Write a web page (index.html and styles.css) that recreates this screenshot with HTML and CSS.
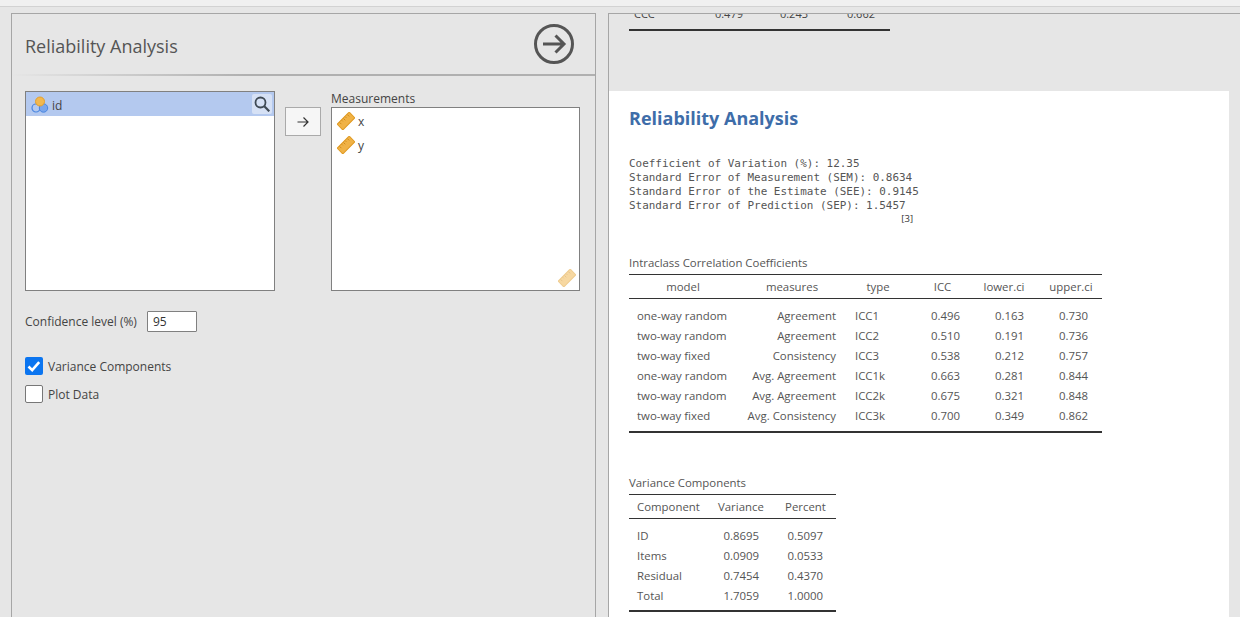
FILE: index.html
```html
<!DOCTYPE html>
<html lang="en">
<head>
    <meta charset="UTF-8">
    <title>Reliability Analysis</title>
    <link rel="stylesheet" href="styles.css">
</head>
<body>
    <svg class="defs" width="0" height="0">
        <symbol id="ruler" viewBox="0 0 18 18">
            <g transform="rotate(-45 9 9)">
                <rect x="0.5" y="5" width="17" height="8" rx="0.8" fill="#f0b246" stroke="#e09a22"/>
                <path d="M3.5 5.5v2.5M6.5 5.5v1.5M9 5.5v2.5M11.5 5.5v1.5M14.5 5.5v2.5" stroke="#c98414" stroke-width="0.8" fill="none"/>
            </g>
        </symbol>
    </svg>

    <div class="topstrip"></div>
    <div class="main">
        <section class="options">
            <header class="options-head">
                <h1>Reliability Analysis</h1>
                <svg class="run" width="42" height="42" viewBox="0 0 42 42">
                    <circle cx="21" cy="21" r="18.5" fill="none" stroke="#555" stroke-width="3"/>
                    <path d="M10 21h21M22.500 12.500l8.500 8.500-8.500 8.500" fill="none" stroke="#555" stroke-width="3"/>
                </svg>
            </header>

            <div class="suppliers">
                <div class="list source">
                    <div class="row selected">
                        <svg class="icon" width="18" height="18" viewBox="0 0 18 18">
                            <circle cx="5" cy="12" r="4" fill="none" stroke="#4a86e0" stroke-width="1.200"/>
                            <circle cx="12.500" cy="12" r="4.200" fill="#7aa6ec" stroke="#4a86e0"/>
                            <circle cx="9" cy="5.500" r="4.500" fill="#f2b84f" stroke="#e3a02e"/>
                        </svg>
                        <span>id</span>
                        <span class="search">
                            <svg width="16" height="16" viewBox="0 0 16 16">
                                <circle cx="6.500" cy="6.500" r="5" fill="none" stroke="#3f4a55" stroke-width="1.800"/>
                                <path d="M10.300 10.300l5 5" stroke="#3f4a55" stroke-width="2.200"/>
                            </svg>
                        </span>
                    </div>
                </div>
                <button class="move" type="button">
                    <svg width="12" height="12" viewBox="0 0 12 12">
                        <path d="M0.500 6h10.500M6.500 1.500l4.500 4.500-4.500 4.500" fill="none" stroke="#333" stroke-width="1.200"/>
                    </svg>
                </button>
                <div class="target">
                    <div class="target-label">Measurements</div>
                    <div class="list">
                        <div class="row"><svg class="icon" width="18" height="18"><use href="#ruler"/></svg><span>x</span></div>
                        <div class="row"><svg class="icon" width="18" height="18"><use href="#ruler"/></svg><span>y</span></div>
                        <svg class="drop-hint" width="18" height="18"><use href="#ruler"/></svg>
                    </div>
                </div>
            </div>

            <div class="conf">
                <label for="conf">Confidence level (%)</label>
                <input id="conf" type="text" value="95">
            </div>

            <div class="check">
                <span class="box on">
                    <svg width="18" height="18" viewBox="0 0 18 18"><path d="M3.500 9.500l3.700 3.700 7-8" fill="none" stroke="#fff" stroke-width="2.600"/></svg>
                </span>
                Variance Components
            </div>
            <div class="check">
                <span class="box"></span>
                Plot Data
            </div>
        </section>

        <section class="results">
            <div class="scrolled">
                <div class="prev-table">
                    <span>CCC</span><span>0.479</span><span>0.243</span><span>0.662</span>
                </div>
            </div>
            <div class="sheet">
                <h2>Reliability Analysis</h2>
                <pre class="mono">Coefficient of Variation (%): 12.35
Standard Error of Measurement (SEM): 0.8634
Standard Error of the Estimate (SEE): 0.9145
Standard Error of Prediction (SEP): 1.5457</pre>
                <div class="ref">[3]</div>

                <table class="t icc">
                    <caption>Intraclass Correlation Coefficients</caption>
                    <thead>
                        <tr><th class="c1">model</th><th class="c2">measures</th><th class="c3">type</th><th class="c4">ICC</th><th class="c5">lower.ci</th><th class="c6">upper.ci</th></tr>
                    </thead>
                    <tbody>
                        <tr><td>one-way random</td><td>Agreement</td><td>ICC1</td><td>0.496</td><td>0.163</td><td>0.730</td></tr>
                        <tr><td>two-way random</td><td>Agreement</td><td>ICC2</td><td>0.510</td><td>0.191</td><td>0.736</td></tr>
                        <tr><td>two-way fixed</td><td>Consistency</td><td>ICC3</td><td>0.538</td><td>0.212</td><td>0.757</td></tr>
                        <tr><td>one-way random</td><td>Avg. Agreement</td><td>ICC1k</td><td>0.663</td><td>0.281</td><td>0.844</td></tr>
                        <tr><td>two-way random</td><td>Avg. Agreement</td><td>ICC2k</td><td>0.675</td><td>0.321</td><td>0.848</td></tr>
                        <tr><td>two-way fixed</td><td>Avg. Consistency</td><td>ICC3k</td><td>0.700</td><td>0.349</td><td>0.862</td></tr>
                    </tbody>
                </table>

                <table class="t var">
                    <caption>Variance Components</caption>
                    <thead>
                        <tr><th class="v1">Component</th><th class="v2">Variance</th><th class="v3">Percent</th></tr>
                    </thead>
                    <tbody>
                        <tr><td>ID</td><td>0.8695</td><td>0.5097</td></tr>
                        <tr><td>Items</td><td>0.0909</td><td>0.0533</td></tr>
                        <tr><td>Residual</td><td>0.7454</td><td>0.4370</td></tr>
                        <tr><td>Total</td><td>1.7059</td><td>1.0000</td></tr>
                    </tbody>
                </table>
            </div>
        </section>
    </div>
</body>
</html>
```

FILE: styles.css
```css
* {
    box-sizing: border-box;
}

html, body {
    height: 100%;
}

body {
    margin: 0;
    overflow: hidden;
    background-color: #e6e6e6;
    font-family: "Open Sans", sans-serif;
    font-size: 11px;
    color: #444;
}

.defs {
    display: block;
}

.topstrip {
    height: 7px;
    background-color: #f0f0f0;
    border-bottom: 1px solid #d2d2d2;
}

.main {
    display: flex;
    height: 610px;
    padding: 6px 0 0 11px;
}

/* left panel */
.options {
    width: 585px;
    height: 620px;
    flex: none;
    border: 1px solid #a6a6a6;
    padding: 0 15px 0 13px;
}

.options-head {
    display: flex;
    justify-content: space-between;
    align-items: center;
    height: 62px;
    margin: 0 -15px 0 -13px;
    padding: 0 20px 2px 13px;
    border-bottom: 2px solid;
    border-image: linear-gradient(to right, #e6e6e6, #b0b0b0 40%) 1;
}

.options-head h1 {
    margin: 6px 0 0;
    font-size: 18px;
    font-weight: 400;
    color: #555;
}

.run {
    margin-top: 2px;
}

.suppliers {
    display: flex;
    align-items: flex-start;
    margin-top: 15px;
}

.list {
    position: relative;
    height: 200px;
    background-color: #fff;
    border: 1px solid #808080;
}

.source {
    width: 250px;
    flex: none;
}

.row {
    display: flex;
    align-items: center;
    gap: 3px;
    height: 24px;
    padding-left: 5px;
    padding-top: 2px;
    font-size: 12px;
}

.row.selected {
    background-color: #b4c9ef;
}

.row.selected .search {
    margin-top: -2px;
}

.icon {
    flex: none;
}

.search {
    display: flex;
    align-items: center;
    justify-content: center;
    width: 20px;
    height: 20px;
    margin-left: auto;
    margin-right: 2px;
    background-color: #d6e1f5;
    border-radius: 2px;
}

.move {
    display: flex;
    align-items: center;
    justify-content: center;
    width: 36px;
    height: 29px;
    flex: none;
    margin: 16px 10px 0;
    padding: 0;
    background-color: #f6f6f6;
    border: 1px solid #aaa;
}

.target {
    width: 249px;
    flex: none;
}

.target-label {
    height: 16px;
    line-height: 15px;
    font-size: 12px;
}

.target .list {
    height: 184px;
}

.drop-hint {
    position: absolute;
    right: 3px;
    bottom: 3px;
    opacity: 0.5;
}

.conf {
    display: flex;
    align-items: center;
    gap: 6px;
    margin-top: 20px;
}

.conf label {
    width: 116px;
    font-size: 12px;
}

.conf input {
    width: 50px;
    height: 21px;
    padding: 0 5px;
    font: 12px "Open Sans", sans-serif;
    color: #333;
    background-color: #fff;
    border: 1px solid #808080;
    border-radius: 1px;
}

.check {
    display: flex;
    align-items: center;
    gap: 5px;
    height: 18px;
    margin-top: 10px;
    font-size: 12px;
}

.conf + .check {
    margin-top: 25px;
}

.box {
    width: 18px;
    height: 18px;
    flex: none;
    background-color: #fff;
    border: 1px solid #777;
    border-radius: 2px;
}

.box.on {
    background-color: #0b75f0;
    border: 0;
}

.box svg {
    display: block;
}

/* right panel */
.results {
    flex: 1;
    margin-left: 12px;
    border-left: 1px solid #a6a6a6;
    border-top: 1px solid #a6a6a6;
    overflow: hidden;
}

.scrolled {
    height: 77px;
    overflow: hidden;
}

.prev-table {
    display: grid;
    grid-template-columns: 50px 64px 65px 67px;
    width: 261px;
    height: 17px;
    margin-left: 20px;
    border-bottom: 2px solid #333;
    line-height: 0;
    text-align: right;
    font-size: 11px;
}

.prev-table span:first-child {
    text-align: left;
    padding-left: 5px;
}

.sheet {
    background-color: #fff;
    height: 530px;
    margin-right: 11px;
    padding: 15px 20px 0;
}

.sheet h2 {
    margin: 0;
    font-size: 18px;
    line-height: 24px;
    font-weight: 700;
    color: #3e6da9;
}

.mono {
    margin: 27px 0 0;
    font-family: "DejaVu Sans Mono", monospace;
    font-size: 10.95px;
    line-height: 14px;
    color: #555;
}

.ref {
    width: 284px;
    height: 14px;
    margin-top: -2px;
    line-height: 15px;
    text-align: right;
    font-size: 9.5px;
    color: #333;
}

.t {
    border-collapse: collapse;
    table-layout: fixed;
    font-size: 11.4px;
    color: #555;
}

.t caption {
    height: 19px;
    line-height: 16px;
    text-align: left;
}

.t th {
    height: 24px;
    padding: 0 0 0 8px;
    font-weight: 400;
    text-align: center;
    border-top: 1px solid #333;
    border-bottom: 1px solid #333;
}

.t tbody tr {
    height: 20px;
}

.t tbody tr:first-child {
    height: 27px;
}

.t tbody tr:first-child td {
    padding-top: 7px;
}

.t tbody tr:last-child {
    height: 26px;
}

.t tbody tr:last-child td {
    padding-bottom: 6px;
    border-bottom: 2px solid #333;
}

.t td {
    padding: 0 8px;
    white-space: nowrap;
}

.icc {
    width: 473px;
    margin-top: 30px;
}

.c1 { width: 108px; }
.c2 { width: 110px; }
.c3 { width: 62px; }
.c4 { width: 59px; }
.c5 { width: 64px; }
.c6 { width: 70px; }

.icc th.c1, .icc th.c2, .icc th.c3 {
    padding-left: 0;
}

.icc td:nth-child(2), .icc td:nth-child(4), .icc td:nth-child(5), .icc td:nth-child(6) {
    text-align: right;
}

.icc td:nth-child(2) {
    padding-right: 11px;
}

.icc td:nth-child(6) {
    padding-right: 14px;
}

.var {
    width: 207px;
    margin-top: 42px;
}

.var tbody tr:last-child td {
    padding-bottom: 4px;
}

.v1 { width: 81px; }
.v2 { width: 57px; }
.v3 { width: 69px; }

.var th.v1 {
    text-align: left;
}

.var th.v2 {
    padding-right: 5px;
}

.var td:nth-child(2), .var td:nth-child(3) {
    text-align: right;
}

.var td:nth-child(3) {
    padding-right: 13px;
}
```
